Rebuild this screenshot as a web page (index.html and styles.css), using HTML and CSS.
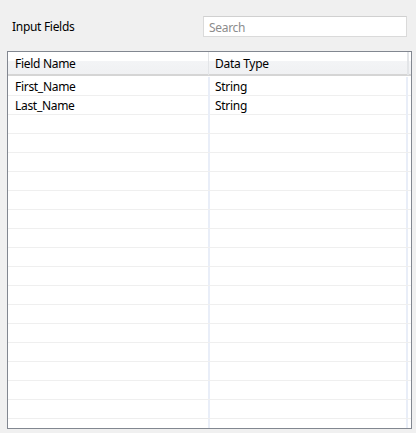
FILE: index.html
```html
<!DOCTYPE html>
<html>
<head>
<meta charset="utf-8">
<link rel="stylesheet" href="styles.css">
</head>
<body>
<div class="page">
  <div class="topbar">
    <span class="title">Input Fields</span>
    <div class="search">Search</div>
  </div>
  <div class="table">
    <div class="thead">
      <div class="th">Field Name</div>
      <div class="th">Data Type</div>
      <div class="th end"></div>
    </div>
    <div class="tbody">
      <div class="row"><div class="td">First_Name</div><div class="td">String</div><div class="td end"></div></div>
      <div class="row"><div class="td">Last_Name</div><div class="td">String</div><div class="td end"></div></div>
      <div class="row"><div class="td"></div><div class="td"></div><div class="td end"></div></div>
      <div class="row"><div class="td"></div><div class="td"></div><div class="td end"></div></div>
      <div class="row"><div class="td"></div><div class="td"></div><div class="td end"></div></div>
      <div class="row"><div class="td"></div><div class="td"></div><div class="td end"></div></div>
      <div class="row"><div class="td"></div><div class="td"></div><div class="td end"></div></div>
      <div class="row"><div class="td"></div><div class="td"></div><div class="td end"></div></div>
      <div class="row"><div class="td"></div><div class="td"></div><div class="td end"></div></div>
      <div class="row"><div class="td"></div><div class="td"></div><div class="td end"></div></div>
      <div class="row"><div class="td"></div><div class="td"></div><div class="td end"></div></div>
      <div class="row"><div class="td"></div><div class="td"></div><div class="td end"></div></div>
      <div class="row"><div class="td"></div><div class="td"></div><div class="td end"></div></div>
      <div class="row"><div class="td"></div><div class="td"></div><div class="td end"></div></div>
      <div class="row"><div class="td"></div><div class="td"></div><div class="td end"></div></div>
      <div class="row"><div class="td"></div><div class="td"></div><div class="td end"></div></div>
      <div class="row"><div class="td"></div><div class="td"></div><div class="td end"></div></div>
      <div class="row"><div class="td"></div><div class="td"></div><div class="td end"></div></div>
      <div class="row"><div class="td"></div><div class="td"></div><div class="td end"></div></div>
    </div>
  </div>
</div>
</body>
</html>
```
FILE: styles.css
```css
html, body {
  margin: 0;
  padding: 0;
  background: #f0f0f0;
}
body {
  font-family: "Noto Sans", "Open Sans", sans-serif;
  font-size: 12px;
  color: #000;
}
.page {
  width: 416px;
  height: 433px;
  overflow: hidden;
}
.topbar {
  height: 51px;
  display: flex;
  align-items: flex-start;
  justify-content: space-between;
  padding-left: 12px;
  padding-right: 9px;
  box-sizing: border-box;
}
.title {
  margin-top: 18px;
  line-height: 18px;
  font-size: 12px;
  letter-spacing: -0.3px;
}
.search {
  margin-top: 16px;
  width: 204px;
  height: 21px;
  box-sizing: border-box;
  border: 1px solid #dadada;
  border-top-color: #d0d0d0;
  background: #fff;
  color: #8c8c8c;
  padding-left: 5px;
  padding-top: 1px;
  line-height: 19px;
  font-size: 12px;
  letter-spacing: -0.3px;
}
.table {
  margin-left: 7px;
  width: 405px;
  height: 378px;
  box-sizing: border-box;
  border: 1px solid #828790;
  background: #fff;
  overflow: hidden;
}
.thead {
  display: grid;
  grid-template-columns: 201px 199px 3px;
  height: 24px;
  box-sizing: border-box;
  border-bottom: 2px solid #d5d5d5;
  background: linear-gradient(#ffffff 0%, #ffffff 40%, #f3f4f6 41%, #f0f1f3 100%);
}
.th {
  border-right: 1px solid #e3e5e8;
  padding-left: 7px;
  padding-top: 1px;
  line-height: 22px;
  letter-spacing: -0.3px;
  white-space: nowrap;
}
.th:nth-child(2) {
  padding-left: 6px;
}
.th.end {
  border-right: none;
  border-left: 1px solid #e3e5e8;
  padding: 0;
}
.row {
  display: grid;
  grid-template-columns: 202px 198px 3px;
  height: 19px;
  box-sizing: border-box;
  border-bottom: 1px solid #efefef;
}
.row:first-child {
  height: 20px;
  padding-top: 1px;
}
.td {
  border-right: 2px solid #e9eef8;
  padding-left: 7px;
  padding-top: 1px;
  line-height: 18px;
  letter-spacing: -0.3px;
  white-space: nowrap;
}
.td:nth-child(2) {
  padding-left: 5px;
}
.td.end {
  border-right: none;
  padding: 0;
}
```
